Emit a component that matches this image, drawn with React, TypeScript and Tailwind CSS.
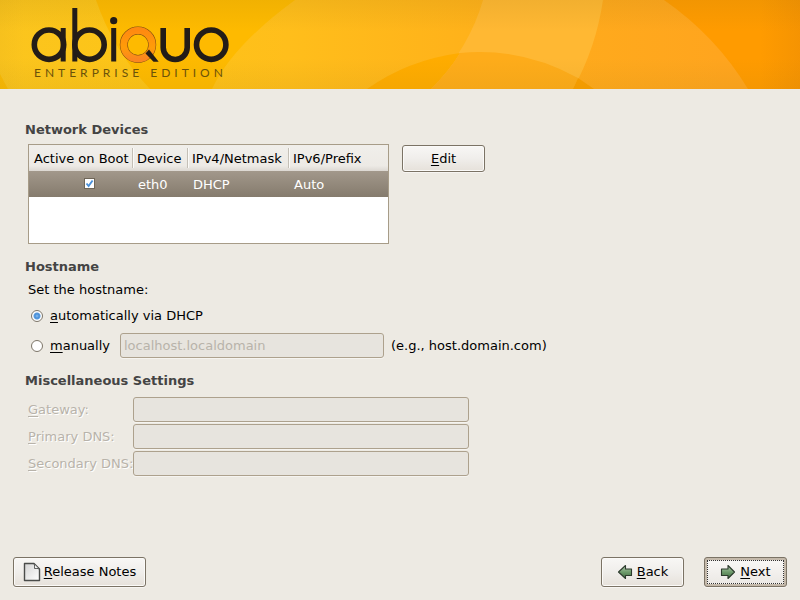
import { useState } from "react";
import type { ReactNode } from "react";

function Backdrop() {
  return (
    <svg
      className="absolute inset-0 h-full w-full"
      viewBox="0 0 800 89"
      preserveAspectRatio="none"
      aria-hidden="true"
    >
      <defs>
        <linearGradient id="base" gradientUnits="userSpaceOnUse" x1="0" y1="0" x2="800" y2="0">
          <stop offset="0" stopColor="#fbc51e" />
          <stop offset="0.18" stopColor="#fdc417" />
          <stop offset="0.36" stopColor="#ffbe1b" />
          <stop offset="0.58" stopColor="#ffb21a" />
          <stop offset="0.72" stopColor="#ffaa1c" />
          <stop offset="0.9" stopColor="#ffa51e" />
          <stop offset="1" stopColor="#ffa51e" />
        </linearGradient>
        <linearGradient id="edges" x1="0" y1="0" x2="0" y2="1">
          <stop offset="0" stopColor="#8a6a10" stopOpacity="0.11" />
          <stop offset="0.35" stopColor="#8a6a10" stopOpacity="0" />
          <stop offset="0.65" stopColor="#8a6a10" stopOpacity="0" />
          <stop offset="1" stopColor="#8a6a10" stopOpacity="0.08" />
        </linearGradient>
        <linearGradient id="sides" x1="0" y1="0" x2="1" y2="0">
          <stop offset="0" stopColor="#a07010" stopOpacity="0.05" />
          <stop offset="0.03" stopColor="#a07010" stopOpacity="0" />
          <stop offset="0.95" stopColor="#a05010" stopOpacity="0" />
          <stop offset="1" stopColor="#a05010" stopOpacity="0.1" />
        </linearGradient>
      </defs>
      <rect width="800" height="89" fill="url(#base)" />
      <path d="M0 74Q4 82 8 89H0Z" fill="#fcbc05" />
      <path d="M96 0Q113 50 150 89H212Q232 46 295 0Z" fill="#feba00" />
      <path d="M483 0Q470 46 431 89H573Q596 48 603 0Z" fill="#ffb833" />
      <path d="M664 0Q716 36 748 89H800V0Z" fill="#ff9b00" />
      <path d="M367 89Q408 60 460 53Q450 70 431 89Z" fill="#ffac00" />
      <path d="M460 53Q522 47 578 78L573 89H431Q450 70 460 53Z" fill="#feac1a" />
      <path d="M578 78L594 89H573Z" fill="#fa9f00" />
      <rect width="800" height="89" fill="url(#edges)" />
      <rect width="800" height="89" fill="url(#sides)" />
    </svg>
  );
}

function Logo() {
  return (
    <svg width="200" height="58" viewBox="30 7 200 58" role="img" aria-label="abiquo">
      <defs>
        <clipPath id="cup">
          <rect x="158" y="28" width="34" height="36" />
        </clipPath>
        <linearGradient id="ring" x1="0" y1="0" x2="0" y2="1">
          <stop offset="0" stopColor="#ff8a10" />
          <stop offset="0.6" stopColor="#ff9c08" />
          <stop offset="1" stopColor="#fb8620" />
        </linearGradient>
      </defs>
      <g fill="none" stroke="#231c18" strokeWidth="5.6">
        <circle cx="49" cy="44.7" r="14.700" />
        <line x1="63.200" y1="28" x2="63.200" y2="61.500" strokeWidth="5" />
        <line x1="74.800" y1="8" x2="74.800" y2="61.500" strokeWidth="5" />
        <circle cx="89.500" cy="44.700" r="14.700" />
        <line x1="113.700" y1="28" x2="113.700" y2="61.500" strokeWidth="5" />
        <rect x="163.200" y="8" width="24" height="51.500" rx="12" clipPath="url(#cup)" />
        <circle cx="211.200" cy="44.700" r="14.700" />
      </g>
      <circle cx="113.700" cy="20.700" r="3.6" fill="#231c18" />
      <circle cx="138" cy="44.700" r="14.2" fill="none" stroke="#7a4a10" strokeWidth="8" />
      <circle cx="138" cy="44.700" r="14.2" fill="none" stroke="url(#ring)" strokeWidth="7" />
      <path d="M145.500 53.500L149 49.500L158.700 61.700H153.500Z" fill="#231c18" />
    </svg>
  );
}

function PageIcon() {
  return (
    <svg width="18" height="20" viewBox="0 0 18 20" aria-hidden="true">
      <defs>
        <linearGradient id="paper" x1="0" y1="0" x2="1" y2="1">
          <stop offset="0" stopColor="#d4d4d4" />
          <stop offset="1" stopColor="#ffffff" />
        </linearGradient>
      </defs>
      <path d="M1.5 1.5H11L16.5 7V18.5H1.5Z" fill="url(#paper)" stroke="#4a4c4a" strokeWidth="1.4" strokeLinejoin="round" />
      <path d="M11 1.5Q12 4 11.500 6.500Q14 6 16.500 7Z" fill="#fff" stroke="#4a4c4a" strokeWidth="0.9" strokeLinejoin="round" />
    </svg>
  );
}

function ArrowIcon({ left = false }: { left?: boolean }) {
  return (
    <svg width="16" height="16" viewBox="0 0 16 16" aria-hidden="true">
      <defs>
        <linearGradient id={left ? "greenL" : "greenR"} x1="0" y1="0" x2="0" y2="1">
          <stop offset="0" stopColor="#b5cdb2" />
          <stop offset="0.5" stopColor="#6f9c6c" />
          <stop offset="1" stopColor="#416b40" />
        </linearGradient>
      </defs>
      <path
        d={left ? "M1.500 8L8.500 1.500V5H14.500V11.500H8.500V14.500Z" : "M14.500 8L8 1.500V5H1.500V11.500H8V14.500Z"}
        fill={left ? "url(#greenL)" : "url(#greenR)"}
        stroke="#2c3a2c"
        strokeWidth="1.1"
        strokeLinejoin="round"
      />
    </svg>
  );
}

const buttonBase =
  "flex items-center justify-center rounded-[3px] border border-[#7b7365] bg-linear-to-b from-[#f8f7f5] via-[#f0eeeb] to-[#e6e1da] shadow-[0_1px_0_#f7f5f2,inset_0_0_0_1px_#fbfaf8]";

const disabledField =
  "h-[25px] rounded-[3px] border border-[#ada18d] bg-[#e7e4de] px-[3px] text-[#b8b3aa] shadow-[0_1px_0_#f6f4f0] outline-none";

function Key({ children }: { children: ReactNode }) {
  return <span className="underline underline-offset-2">{children}</span>;
}

function Heading({ children }: { children: ReactNode }) {
  return <h2 className="font-bold text-[#444444]">{children}</h2>;
}

const columns = [
  { title: "Active on Boot", width: "w-[104px]", pad: "pl-[5px]" },
  { title: "Device", width: "w-[55px]", pad: "pl-1" },
  { title: "IPv4/Netmask", width: "w-[101px]", pad: "pl-1" },
  { title: "IPv6/Prefix", width: "", pad: "pl-1" },
];

function DeviceTable() {
  const [active, setActive] = useState(true);
  return (
    <div className="h-[100px] w-[361px] border border-[#a79c88] bg-white">
      <table className="w-full table-fixed border-collapse text-left">
        <thead>
          <tr className="h-[26px] bg-linear-to-b from-[#f0eeea] from-10% via-[#edeae5] via-80% to-[#dcd8d2]">
            {columns.map((c, i) => (
              <th key={c.title} className={`${c.width} p-0 font-normal whitespace-nowrap`}>
                <div
                  className={`${c.pad} h-5 pt-px leading-5 ${
                    i < 3 ? "border-r border-[#c4bfb6] shadow-[1px_0_0_#fbfaf8]" : ""
                  }`}
                >
                  {c.title}
                </div>
              </th>
            ))}
          </tr>
        </thead>
        <tbody>
          <tr className="h-[26px] bg-linear-to-b from-[#a2988b] to-[#857b6d] text-white">
            <td className="p-0">
              <label className="relative mb-px ml-[55px] block size-[11px]">
                <input
                  type="checkbox"
                  aria-label="Active on boot"
                  checked={active}
                  onChange={(e) => setActive(e.target.checked)}
                  className="block size-[11px] appearance-none border border-[#6f6658] bg-white"
                />
                {active && (
                  <svg className="pointer-events-none absolute inset-0" width="11" height="11" viewBox="0 0 11 11" aria-hidden="true">
                    <path d="M2.500 5.500L4.600 8L8.600 2.500" fill="none" stroke="#4a90d9" strokeWidth="1.9" />
                  </svg>
                )}
              </label>
            </td>
            <td className="p-0 pt-[2px] pl-[5px]">eth0</td>
            <td className="p-0 pt-[2px] pl-[5px]">DHCP</td>
            <td className="p-0 pt-[2px] pl-[5px]">Auto</td>
          </tr>
        </tbody>
      </table>
    </div>
  );
}

const radioStyle =
  "size-3 shrink-0 appearance-none rounded-full border border-[#7d7568] bg-white checked:bg-[radial-gradient(circle_at_50%_50%,#8fc0ee_0,#4a90d9_2px,#5b9bdd_3px,#ffffff_4px)]";

const settings = [
  { id: "gateway", key: "G", rest: "ateway:" },
  { id: "dns1", key: "P", rest: "rimary DNS:" },
  { id: "dns2", key: "S", rest: "econdary DNS:" },
];

export default function App() {
  const [mode, setMode] = useState("dhcp");
  return (
    <div className="flex min-h-screen flex-col bg-[#edeae3] font-['DejaVu_Sans',sans-serif] text-[13px] leading-4 text-black">
      <header className="relative h-[89px] overflow-hidden">
        <Backdrop />
        <div className="relative flex flex-col pt-[7px] pl-[30px]">
          <Logo />
          <p className="pl-1 font-['Lato',sans-serif] text-[12px] leading-4 tracking-[4px] text-[#6b520a]">
            ENTERPRISE EDITION
          </p>
        </div>
      </header>

      <main className="flex grow flex-col gap-[15px] pt-[33px] pr-4 pl-[25px]">
        <section className="flex flex-col gap-[6px]">
          <Heading>Network Devices</Heading>
          <div className="flex items-start gap-[13px] pl-[3px]">
            <DeviceTable />
            <button type="button" className={`${buttonBase} mt-px h-[27px] w-[83px]`}>
              <span>
                <Key>E</Key>dit
              </span>
            </button>
          </div>
        </section>

        <section className="flex flex-col gap-[7px]">
          <Heading>Hostname</Heading>
          <div className="flex flex-col gap-[7px] pl-[3px]">
            <p>Set the hostname:</p>
            <label className="flex h-[21px] items-center gap-[7px] pl-[3px]">
              <input type="radio" name="host" checked={mode === "dhcp"} onChange={() => setMode("dhcp")} className={radioStyle} />
              <span>
                <Key>a</Key>utomatically via DHCP
              </span>
            </label>
            <div className="flex items-center pl-[3px]">
              <label className="flex w-[89px] items-center gap-[7px]">
                <input type="radio" name="host" checked={mode === "manual"} onChange={() => setMode("manual")} className={radioStyle} />
                <span>
                  <Key>m</Key>anually
                </span>
              </label>
              <input
                type="text"
                aria-label="Hostname"
                defaultValue="localhost.localdomain"
                disabled={mode !== "manual"}
                className={`${disabledField} w-[264px]`}
              />
              <span className="pl-[7px]">(e.g., host.domain.com)</span>
            </div>
          </div>
        </section>

        <section className="flex flex-col gap-2">
          <Heading>Miscellaneous Settings</Heading>
          <div className="flex flex-col gap-[2px] pl-[3px]">
            {settings.map((s) => (
              <div key={s.id} className="flex items-center">
                <label htmlFor={s.id} className="w-[105px] whitespace-nowrap text-[#b8b3aa] [text-shadow:1px_1px_0_#ffffff]">
                  <Key>{s.key}</Key>
                  {s.rest}
                </label>
                <input id={s.id} type="text" disabled className={`${disabledField} w-[336px]`} />
              </div>
            ))}
          </div>
        </section>
      </main>

      <footer className="flex items-center gap-5 p-[13px]">
        <button type="button" className={`${buttonBase} mr-auto h-[30px] w-[133px] gap-[3px]`}>
          <PageIcon />
          <span>
            <Key>R</Key>elease Notes
          </span>
        </button>
        <button type="button" className={`${buttonBase} h-[30px] w-[83px] gap-1`}>
          <ArrowIcon left />
          <span>
            <Key>B</Key>ack
          </span>
        </button>
        <button
          type="button"
          className="flex h-[30px] w-[83px] rounded-[3px] border border-[#7b7365] bg-[#c4b9aa] p-[2px] shadow-[0_1px_0_#f7f5f2]"
        >
          <span className="flex h-full w-full items-center justify-center gap-1 border border-dotted border-[#333333] bg-linear-to-b from-[#f8f7f5] to-[#ece9e5]">
            <ArrowIcon />
            <span>
              <Key>N</Key>ext
            </span>
          </span>
        </button>
      </footer>
    </div>
  );
}
